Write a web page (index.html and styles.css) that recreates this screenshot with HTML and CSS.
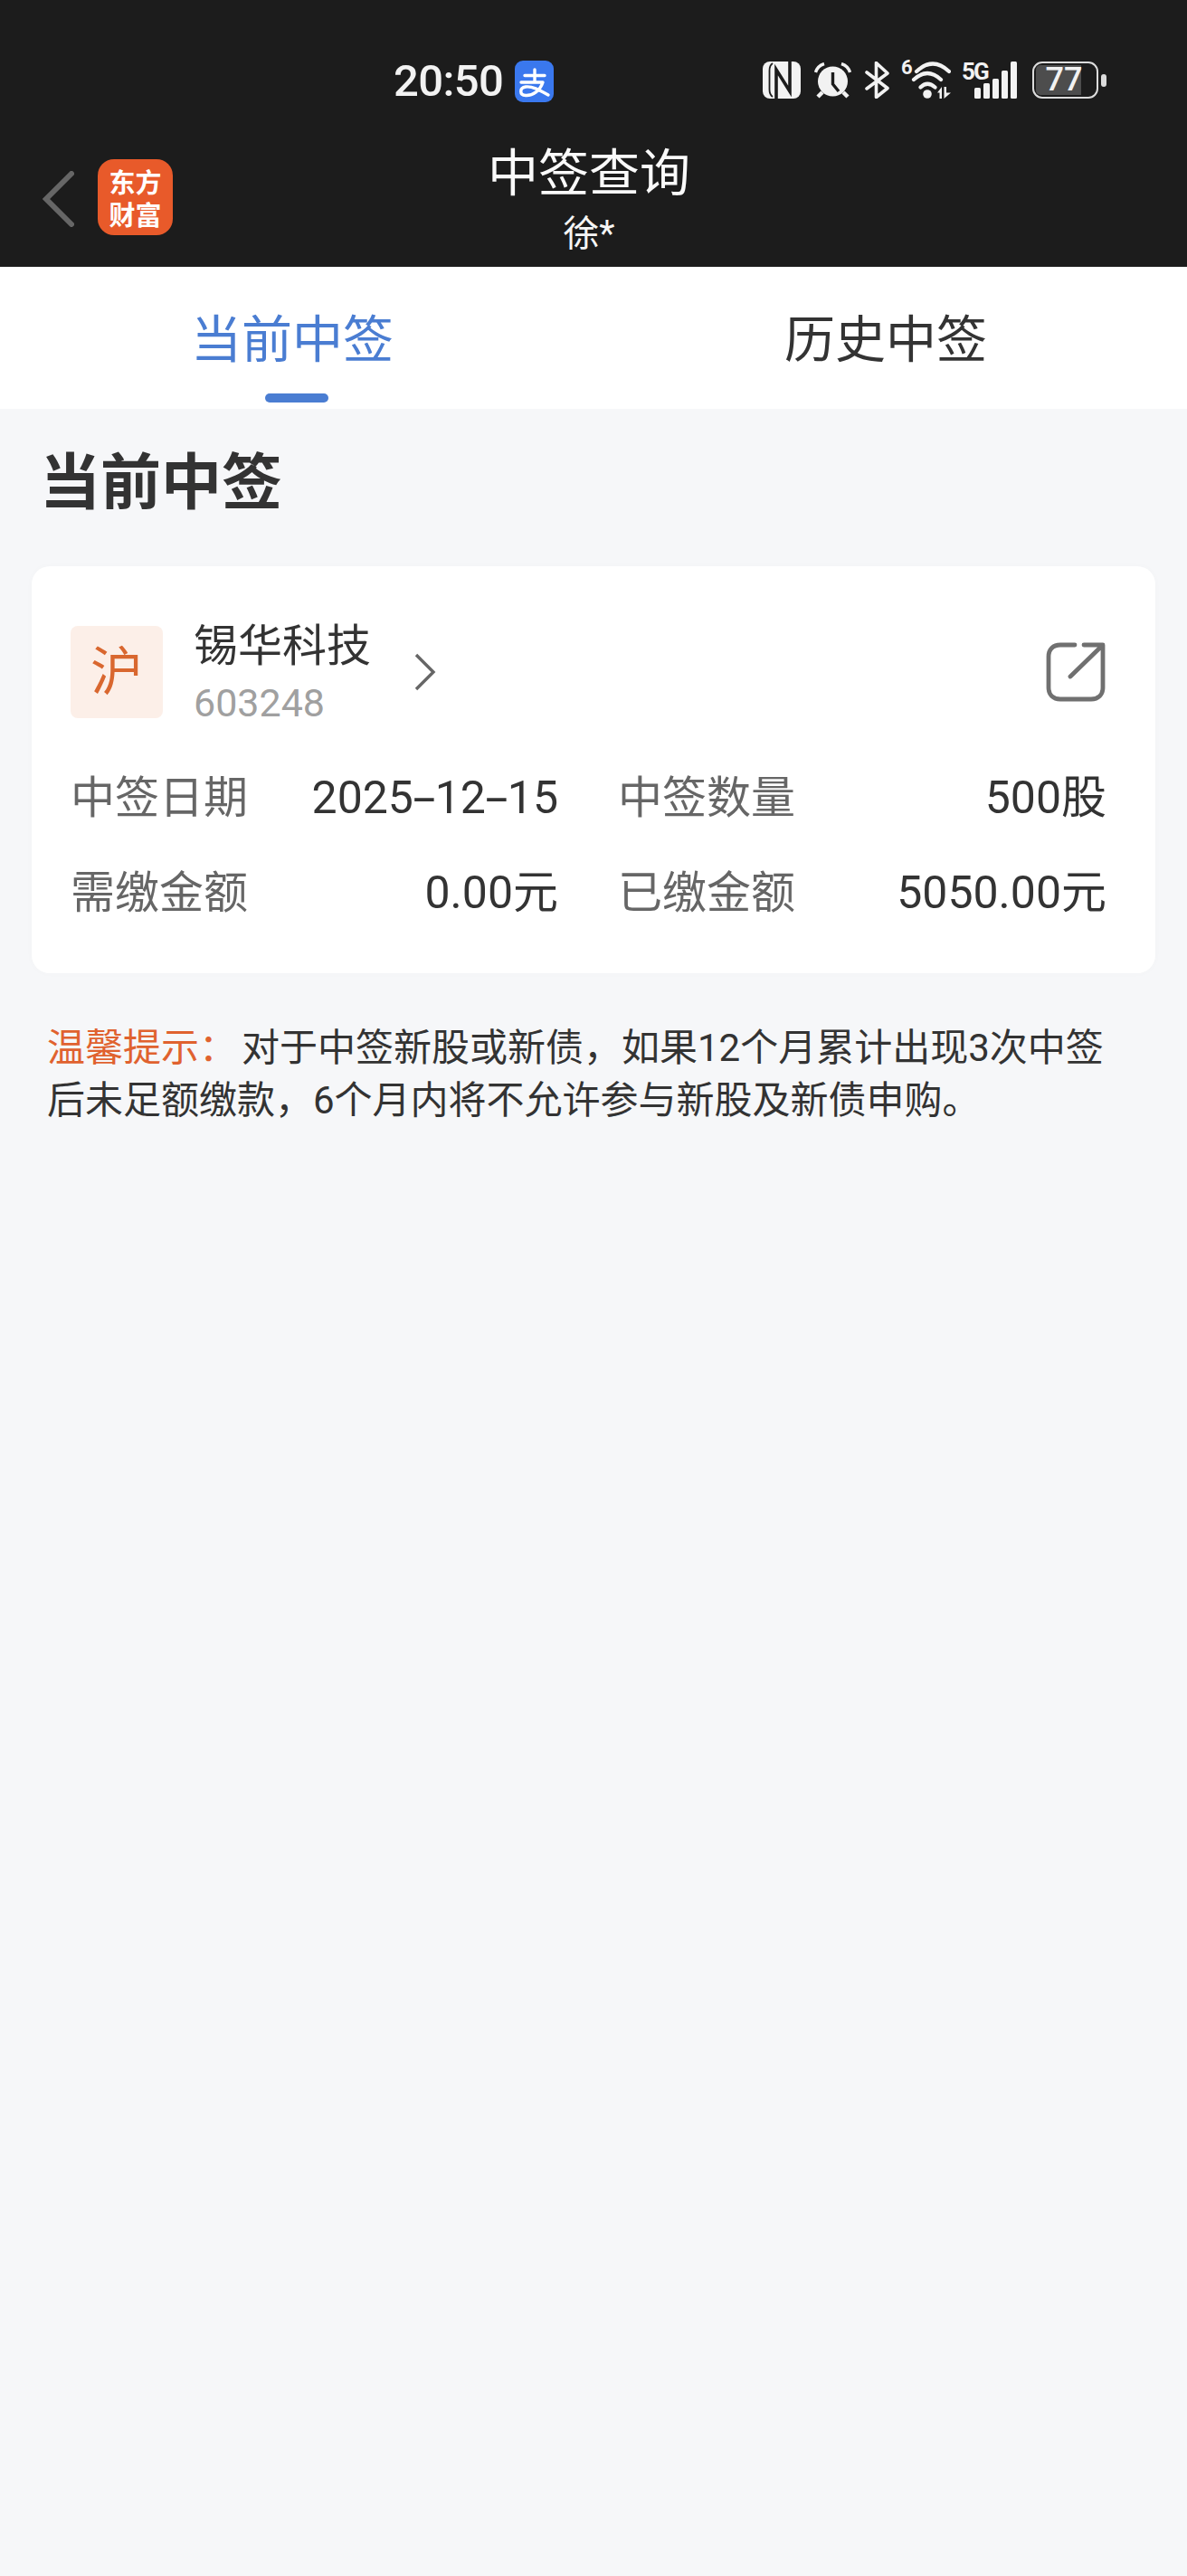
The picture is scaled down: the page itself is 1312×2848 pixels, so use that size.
FILE: index.html
```html
<!DOCTYPE html>
<html lang="zh-CN">
<head>
<meta charset="utf-8">
<title>中签查询</title>
<link rel="stylesheet" href="styles.css">
</head>
<body>
<header class="top">
  <div class="status">
    <div class="clock"><span class="time">20:50</span>
      <svg class="alipay" viewBox="0 0 43 46"><rect width="43" height="46" rx="9" fill="#3a78ee"/><path d="M22 10V24M11 16.500H33M7 24H31C28 33 20 39 12 38.500C5 38 5 30 12 29C20 28 28 33 37 38" fill="none" stroke="#fff" stroke-width="3.400" stroke-linecap="round" stroke-linejoin="round"/></svg>
    </div>
    <div class="icons">
      <svg class="i-nfc" viewBox="0 0 42 41"><rect width="42" height="41" rx="8" fill="#f2f2f2"/><path d="M15 41V9L30 33V0" fill="none" stroke="#1c1c1c" stroke-width="3.600"/><path d="M11 2C8 4 7.500 7 7.500 10V31C7.500 35 8 37 11 39" fill="none" stroke="#1c1c1c" stroke-width="1.800"/></svg>
      <svg class="i-alarm" viewBox="0 0 41 40"><circle cx="20.500" cy="21" r="16.500" fill="#f2f2f2"/><path d="M20.500 11V24L27 32" fill="none" stroke="#1c1c1c" stroke-width="3.400"/><path d="M1.500 11C3 6 6 3 11 1.500M39.500 11C38 6 35 3 30 1.500" fill="none" stroke="#f2f2f2" stroke-width="3.400"/><path d="M9 33L4 38M32 33L37 38" stroke="#f2f2f2" stroke-width="4.500"/></svg>
      <svg class="i-bt" viewBox="0 0 27 41"><path d="M2 12L25 29.500L12.500 39.500V1.500L25 13L2 30" fill="none" stroke="#f2f2f2" stroke-width="3.600" stroke-linejoin="round" stroke-linecap="round"/></svg>
      <div class="wifi">
        <span class="wifi-six">6</span>
        <svg class="i-wifi" viewBox="0 0 44 41"><path d="M6 11Q24 -6 42 11M3 20Q18 6 33 20M10.500 28.500Q18 21 26.500 28.500" fill="none" stroke="#f2f2f2" stroke-width="4.200" stroke-linecap="round"/><circle cx="18" cy="36" r="4.800" fill="#f2f2f2"/><path d="M34 28V41H31.500V34.500H29ZM36.500 28H39V34.500H44L36.500 41Z" fill="#f2f2f2"/></svg>
      </div>
      <div class="signal">
        <span class="fiveg">5G</span>
        <div class="bars"><i class="b1"></i><i class="b2"></i><i class="b3"></i><i class="b4"></i><i class="b5"></i></div>
      </div>
      <div class="battery"><div class="batt-body"><span class="batt-fill"></span><span class="batt-num">77</span></div><span class="batt-cap"></span></div>
    </div>
  </div>
  <div class="nav">
    <svg class="back" viewBox="0 0 35 62"><path d="M32 3L4 31L32 59" fill="none" stroke="#666" stroke-width="6" stroke-linecap="round"/></svg>
    <div class="logo"><span>东方</span><span>财富</span></div>
    <div class="title"><div class="title-main">中签查询</div><div class="title-sub">徐*</div></div>
  </div>
</header>
<nav class="tabs">
  <div class="tab active">当前中签</div>
  <div class="tab">历史中签</div>
</nav>
<main class="content">
  <h1 class="heading">当前中签</h1>
  <section class="card">
    <div class="card-head">
      <div class="badge">沪</div>
      <div class="stock"><div class="stock-name">锡华科技</div><div class="stock-code">603248</div></div>
      <svg class="chev" viewBox="0 0 26 44"><path d="M3 3L22 22L3 41" fill="none" stroke="#666" stroke-width="3.400"/></svg>
      <svg class="share" viewBox="0 0 66 66"><path d="M32 3H16C8 3 3 8 3 16V50C3 58 8 63 16 63H50C58 63 63 58 63 50V3H42M27 38L61 5" fill="none" stroke="#707070" stroke-width="4.800" stroke-linecap="round" stroke-linejoin="round"/></svg>
    </div>
    <div class="grid">
      <div class="cell"><span class="lbl">中签日期</span><span class="val">2025<span class="dash">-</span>12<span class="dash">-</span>15</span></div>
      <div class="cell"><span class="lbl">中签数量</span><span class="val">500股</span></div>
      <div class="cell"><span class="lbl">需缴金额</span><span class="val">0.00元</span></div>
      <div class="cell"><span class="lbl">已缴金额</span><span class="val">5050.00元</span></div>
    </div>
  </section>
  <p class="tip"><span class="tip-lead">温馨提示：</span>对于中签新股或新债，如果12个月累计出现3次中签后未足额缴款，6个月内将不允许参与新股及新债申购。</p>
</main>
</body>
</html>
```
FILE: styles.css
```css
* { box-sizing: border-box; margin: 0; padding: 0; }
html, body { background: #f6f7f9; }
body { width: 1312px; height: 2848px; overflow: hidden; font-family: Roboto, "Noto Sans CJK SC", sans-serif; color: #333; }
.top { background: #1c1c1c; height: 295px; color: #fff; }
.status { height: 150px; display: flex; padding: 67px 0 0 435px; }
.clock { display: flex; align-items: flex-start; height: 46px; width: 408px; }
.time { font-size: 49px; font-weight: 500; line-height: 46px; color: #f2f2f2; width: 134px; letter-spacing: -0.6px; }
.alipay { width: 43px; height: 46px; }
.icons { display: flex; align-items: flex-start; height: 41px; margin-top: 1px; }
.i-nfc { width: 42px; height: 41px; }
.i-alarm { width: 41px; height: 40px; margin: 1px 0 0 15px; }
.i-bt { width: 27px; height: 41px; margin-left: 15px; }
.wifi { display: flex; margin-left: 13px; height: 41px; }
.wifi-six { font-size: 22px; font-weight: 700; line-height: 22px; color: #f2f2f2; width: 11px; margin-top: -4px; }
.i-wifi { width: 44px; height: 41px; }
.signal { position: relative; width: 61px; height: 41px; margin-left: 12px; }
.fiveg { position: absolute; left: 0; top: -2px; font-size: 26px; font-weight: 700; line-height: 26px; color: #f2f2f2; letter-spacing: -2px; }
.bars { position: absolute; left: 14px; bottom: 0; display: flex; align-items: flex-end; gap: 3.500px; }
.bars i { display: block; width: 6.500px; background: #f2f2f2; border-radius: 1.500px; }
.bars .b1 { height: 12px; }
.bars .b2 { height: 17px; }
.bars .b3 { height: 22px; }
.bars .b4 { height: 31px; }
.bars .b5 { height: 41px; }
.battery { display: flex; align-items: center; height: 41px; margin-left: 17px; }
.batt-body { position: relative; width: 73px; height: 41px; border: 2.500px solid #dcdcdc; border-radius: 11px; overflow: hidden; padding: 2px; }
.batt-fill { display: block; height: 100%; width: 50px; background: #4d4d4d; border-radius: 5px 0 0 5px; }
.batt-num { position: absolute; left: 5px; top: 0; width: 56px; text-align: center; font-size: 36px; font-weight: 500; line-height: 36px; color: #f2f2f2; }
.batt-cap { width: 6px; height: 14px; margin-left: 3px; background: #dcdcdc; border-radius: 3px; }
.nav { position: relative; height: 145px; display: flex; align-items: flex-start; }
.back { width: 35px; height: 62px; margin: 39px 0 0 47px; }
.logo { width: 83px; height: 84px; margin: 26px 0 0 26px; background: #e85a2a; border-radius: 18px; display: flex; flex-direction: column; align-items: center; justify-content: center; font-family: "Noto Sans CJK SC", sans-serif; font-weight: 700; font-size: 29px; line-height: 36px; color: #fff; }
.title { position: absolute; left: 0; right: 0; top: 6px; padding-right: 10px; text-align: center; }
.title-main { font-size: 56px; line-height: 72px; color: #fafafa; }
.title-sub { font-size: 40px; line-height: 44px; margin-top: 9px; color: #f5f5f5; }
.tabs { height: 157px; background: #fff; display: flex; }
.tab { position: relative; width: 50%; height: 157px; text-align: center; font-size: 56px; padding: 5px 10px 0 0; line-height: 152px; color: #333; }
.tab.active { color: #4a7dd2; }
.tab.active::after { content: ""; position: absolute; left: 293px; bottom: 7px; width: 70px; height: 10px; border-radius: 5px; background: #4a7dd2; }
.content { padding: 0 16px; }
.heading { font-size: 67px; font-weight: 700; line-height: 90px; color: #333; margin: 37px 0 0 28px; }
.card { margin: 47px 0 0 19px; width: 1242px; height: 450px; background: #fff; border-radius: 20px; padding: 65px 55px 0 43px; box-shadow: 0 0 8px rgba(0,0,0,.02); }
.card-head { display: flex; align-items: center; height: 104px; }
.badge { width: 102px; height: 102px; background: #fcefe8; border-radius: 8px; color: #d9672f; font-size: 58px; line-height: 102px; text-align: center; }
.stock { margin: 6px 0 0 34px; width: 241px; }
.stock-name { font-size: 49px; line-height: 62px; color: #333; }
.stock-code { font-size: 43px; line-height: 62px; color: #a0a0a0; }
.chev { width: 26px; height: 44px; margin-left: 2px; }
.share { width: 66px; height: 66px; margin-left: auto; }
.grid { display: grid; grid-template-columns: 539px 540px; column-gap: 66px; margin-top: 35px; }
.cell { display: flex; justify-content: space-between; align-items: baseline; height: 105px; font-size: 50px; line-height: 105px; }
.lbl { color: #666; font-size: 49px; }
.val { color: #333; }
.dash { display: inline-block; margin: 0 5px; transform: scaleX(1.800); }
.tip { margin: 54px 0 0 36px; width: 1182px; font-size: 42px; line-height: 58px; color: #333; }
.tip-lead { color: #e0622f; margin-right: 5px; }
```
